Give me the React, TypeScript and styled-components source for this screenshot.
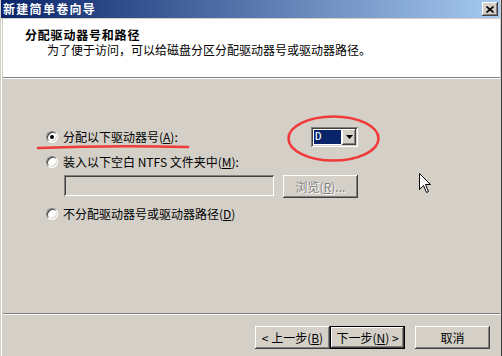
import React from "react";
import styled, { createGlobalStyle } from "styled-components";

const Global = createGlobalStyle`
  html, body { margin: 0; padding: 0; background: #d4d0c8; }
  body { font-family: "Noto Sans CJK SC", "Noto Sans", sans-serif; font-size: 12px; color: #000; }
  * { box-sizing: border-box; }
`;

const Frame = styled.div`
  position: relative;
  width: 502px;
  height: 356px;
  overflow: hidden;
  background: #d4d0c8;
  padding: 0 1px;
  border-right: 1px solid #404040;
  display: flex;
  flex-direction: column;
`;

const TitleBar = styled.div`
  height: 18px;
  flex: none;
  display: flex;
  align-items: center;
  justify-content: space-between;
  padding: 0 2px 0 2px;
  background: linear-gradient(to right, #0a246a, #a6caf0);
`;

const TitleText = styled.span`
  color: #fff;
  font-weight: bold;
  font-size: 12px;
  letter-spacing: 1.3px;
  line-height: 18px;
`;

const CloseBtn = styled.div`
  width: 16px;
  height: 14px;
  background: #d4d0c8;
  box-shadow: inset -1px -1px #404040, inset 1px 1px #fff, inset -2px -2px #808080;
  display: flex;
  align-items: center;
  justify-content: center;
`;

const Inner = styled.div`
  flex: 1;
  margin-top: 1px;
  border-left: 1px solid #fff;
  padding-left: 1px;
  display: flex;
  flex-direction: column;
`;

const Header = styled.div`
  height: 58px;
  flex: none;
  background: #fff;
  padding: 9px 0 0 22px;
`;

const HeaderTitle = styled.div`
  font-weight: bold;
  font-size: 12px;
  line-height: 14px;
  letter-spacing: 0.8px;
`;

const HeaderSub = styled.div`
  font-size: 12px;
  line-height: 15px;
  padding-left: 22px;
`;

const Separator = styled.div`
  height: 2px;
  flex: none;
  border-top: 1px solid #808080;
  border-bottom: 1px solid #fff;
`;

const Body = styled.div`
  height: 234px;
  flex: none;
  padding: 48px 0 0 43px;
`;

const Group = styled.div`
  width: 312px;
  display: flex;
  flex-direction: column;
`;

const Row = styled.div<{ $top?: number; $h?: number }>`
  display: flex;
  align-items: center;
  justify-content: space-between;
  height: ${(p) => p.$h ?? 14}px;
  margin-top: ${(p) => p.$top ?? 0}px;
`;

const RadioLabel = styled.label`
  display: flex;
  align-items: center;
  gap: 5px;
  line-height: 14px;
  white-space: nowrap;
`;

const RadioCircle = styled.span<{ $checked?: boolean }>`
  width: 12px;
  height: 12px;
  border-radius: 50%;
  background: #fff;
  border: 1px solid;
  border-color: #808080 #fff #fff #808080;
  box-shadow: inset 1px 1px #404040, inset -1px -1px #d4d0c8;
  display: flex;
  align-items: center;
  justify-content: center;
  flex: none;
  &::after {
    content: "";
    width: 4px;
    height: 4px;
    border-radius: 50%;
    background: ${(p) => (p.$checked ? "#000" : "transparent")};
  }
`;

const Combo = styled.div`
  width: 47px;
  height: 20px;
  display: flex;
  padding: 2px;
  background: #fff;
  box-shadow: inset 1px 1px #808080, inset -1px -1px #fff, inset 2px 2px #404040, inset -2px -2px #d4d0c8;
`;

const ComboText = styled.div`
  flex: 1;
  margin: 1px;
  background: #0a246a;
  color: #fff;
  font-family: "DejaVu Sans Mono", monospace;
  font-size: 11px;
  line-height: 14px;
  padding-left: 1px;
`;

const ComboButton = styled.div`
  width: 14px;
  background: #d4d0c8;
  box-shadow: inset -1px -1px #404040, inset 1px 1px #fff, inset -2px -2px #808080;
  display: flex;
  align-items: center;
  justify-content: center;
`;

const InputRow = styled.div`
  display: flex;
  gap: 9px;
  margin-top: 6px;
  padding-left: 18px;
  height: 21px;
`;

const TextBox = styled.div`
  width: 210px;
  height: 21px;
  background: #d4d0c8;
  box-shadow: inset 1px 1px #808080, inset -1px -1px #fff, inset 2px 2px #404040, inset -2px -2px #d4d0c8;
`;

const Button = styled.div<{ $default?: boolean; $disabled?: boolean }>`
  width: 75px;
  height: 23px;
  display: flex;
  align-items: center;
  justify-content: center;
  background: #d4d0c8;
  font-size: 12px;
  line-height: 14px;
  white-space: nowrap;
  color: ${(p) => (p.$disabled ? "#808080" : "#000")};
  text-shadow: ${(p) => (p.$disabled ? "1px 1px 0 #fff" : "none")};
  border: ${(p) => (p.$default ? "1px solid #000" : "none")};
  box-shadow: inset -1px -1px #404040, inset 1px 1px #fff, inset -2px -2px #808080;
`;

const Footer = styled.div`
  flex: 1;
  display: flex;
  justify-content: flex-end;
  align-items: flex-start;
  padding: 11px 10px 0 0;
`;

const ButtonPair = styled.div`
  display: flex;
  margin-right: 10px;
`;

const Overlay = styled.svg`
  position: absolute;
  left: 0;
  top: 0;
  pointer-events: none;
`;

export default function App() {
  return (
    <>
      <Global />
      <Frame>
        <TitleBar>
          <TitleText>新建简单卷向导</TitleText>
          <CloseBtn>
            <svg width="8" height="7" viewBox="0 0 8 7">
              <path d="M0.5 0.5 L7.5 6.5 M7.5 0.5 L0.5 6.5" stroke="#000" strokeWidth="1.6" />
            </svg>
          </CloseBtn>
        </TitleBar>
        <Inner>
          <Header>
            <HeaderTitle>分配驱动器号和路径</HeaderTitle>
            <HeaderSub>为了便于访问，可以给磁盘分区分配驱动器号或驱动器路径。</HeaderSub>
          </Header>
          <Separator />
          <Body>
            <Group>
              <Row $h={20}>
                <RadioLabel>
                  <RadioCircle $checked />
                  <span>分配以下驱动器号(<u>A</u>):</span>
                </RadioLabel>
                <Combo>
                  <ComboText>D</ComboText>
                  <ComboButton>
                    <svg width="7" height="4" viewBox="0 0 7 4">
                      <path d="M0 0 H7 L3.5 4 Z" fill="#000" />
                    </svg>
                  </ComboButton>
                </Combo>
              </Row>
              <Row $top={8}>
                <RadioLabel>
                  <RadioCircle />
                  <span>装入以下空白 NTFS 文件夹中(<u>M</u>):</span>
                </RadioLabel>
              </Row>
              <InputRow>
                <TextBox />
                <Button $disabled>浏览(<u>R</u>)...</Button>
              </InputRow>
              <Row $top={11}>
                <RadioLabel>
                  <RadioCircle />
                  <span>不分配驱动器号或驱动器路径(<u>D</u>)</span>
                </RadioLabel>
              </Row>
            </Group>
          </Body>
          <Separator />
          <Footer>
            <ButtonPair>
              <Button>&lt; 上一步(<u>B</u>)</Button>
              <Button $default>下一步(<u>N</u>) &gt;</Button>
            </ButtonPair>
            <Button>取消</Button>
          </Footer>
        </Inner>
        <Overlay width="502" height="356" viewBox="0 0 502 356">
          <ellipse cx="333.5" cy="138.5" rx="45" ry="22" fill="none" stroke="#f03a3a" strokeWidth="2.6" />
          <path d="M38 148 Q110 145 188 147" fill="none" stroke="#f03a3a" strokeWidth="2.6" strokeLinecap="round" />
          <path
            d="M419.5 173.5 L419.5 189.5 L423.5 185.5 L426.5 192.5 L428.5 191.5 L425.5 184.5 L430.5 184.5 Z"
            fill="#fff"
            stroke="#000"
            strokeWidth="1"
          />
        </Overlay>
      </Frame>
    </>
  );
}
